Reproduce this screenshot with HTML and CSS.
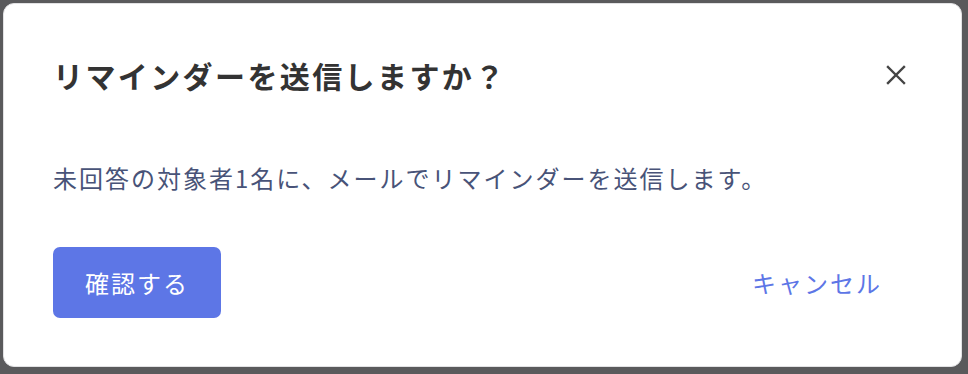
FILE: index.html
```html
<!DOCTYPE html>
<html lang="ja">
	<head>
		<meta charset="utf-8">
		<title>リマインダー送信</title>
		<link rel="stylesheet" href="styles.css">
	</head>
	<body>
		<div class="backdrop">
			<div class="modal">
				<div class="modal-header">
					<p class="modal-title">リマインダーを送信しますか？</p>
					<button class="close-button" aria-label="閉じる">
						<svg width="20" height="20" viewBox="0 0 20 20">
							<path d="M2 2 L18 18 M18 2 L2 18" stroke="#444" stroke-width="2.4" stroke-linecap="square" fill="none"/>
						</svg>
					</button>
				</div>
				<p class="modal-text">未回答の対象者1名に、メールでリマインダーを送信します。</p>
				<div class="modal-footer">
					<button class="confirm-button">確認する</button>
					<button class="cancel-button">キャンセル</button>
				</div>
			</div>
		</div>
	</body>
</html>
```

FILE: styles.css
```css
*{
	box-sizing: border-box;
}
body{
	margin: 0;
	background-color: #5a5a5c;
	font-family: "Noto Sans CJK JP", "Noto Sans", sans-serif;
}
.backdrop{
	padding: 3px 6px 7px 3px;
	height: 374px;
}
.modal{
	background-color: white;
	border: 1px solid #e2e2e4;
	border-radius: 11px;
	height: 100%;
	padding: 47px 49px 48px 49px;
}
.modal-header{
	display: flex;
	justify-content: space-between;
	align-items: center;
}
.modal-title{
	margin: 0;
	font-size: 30px;
	line-height: 48px;
	font-weight: bold;
	letter-spacing: 2.4px;
	color: #333333;
}
.close-button{
	width: 32px;
	height: 32px;
	border: none;
	background: none;
	padding: 0;
	display: flex;
	align-items: center;
	justify-content: center;
	cursor: pointer;
}
.modal-text{
	margin: 60px 0 50px 0;
	font-size: 24px;
	line-height: 38px;
	letter-spacing: 2px;
	color: #485378;
}
.modal-footer{
	display: flex;
	justify-content: space-between;
}
.confirm-button{
	background-color: #5d76e6;
	color: white;
	border: none;
	border-radius: 7px;
	height: 71px;
	padding: 0 32px;
	font-family: inherit;
	font-size: 24px;
	letter-spacing: 2px;
	cursor: pointer;
}
.cancel-button{
	background: none;
	color: #5d76e6;
	border: none;
	height: 71px;
	padding: 0 30px;
	font-family: inherit;
	font-size: 24px;
	letter-spacing: 2px;
	cursor: pointer;
}
```
